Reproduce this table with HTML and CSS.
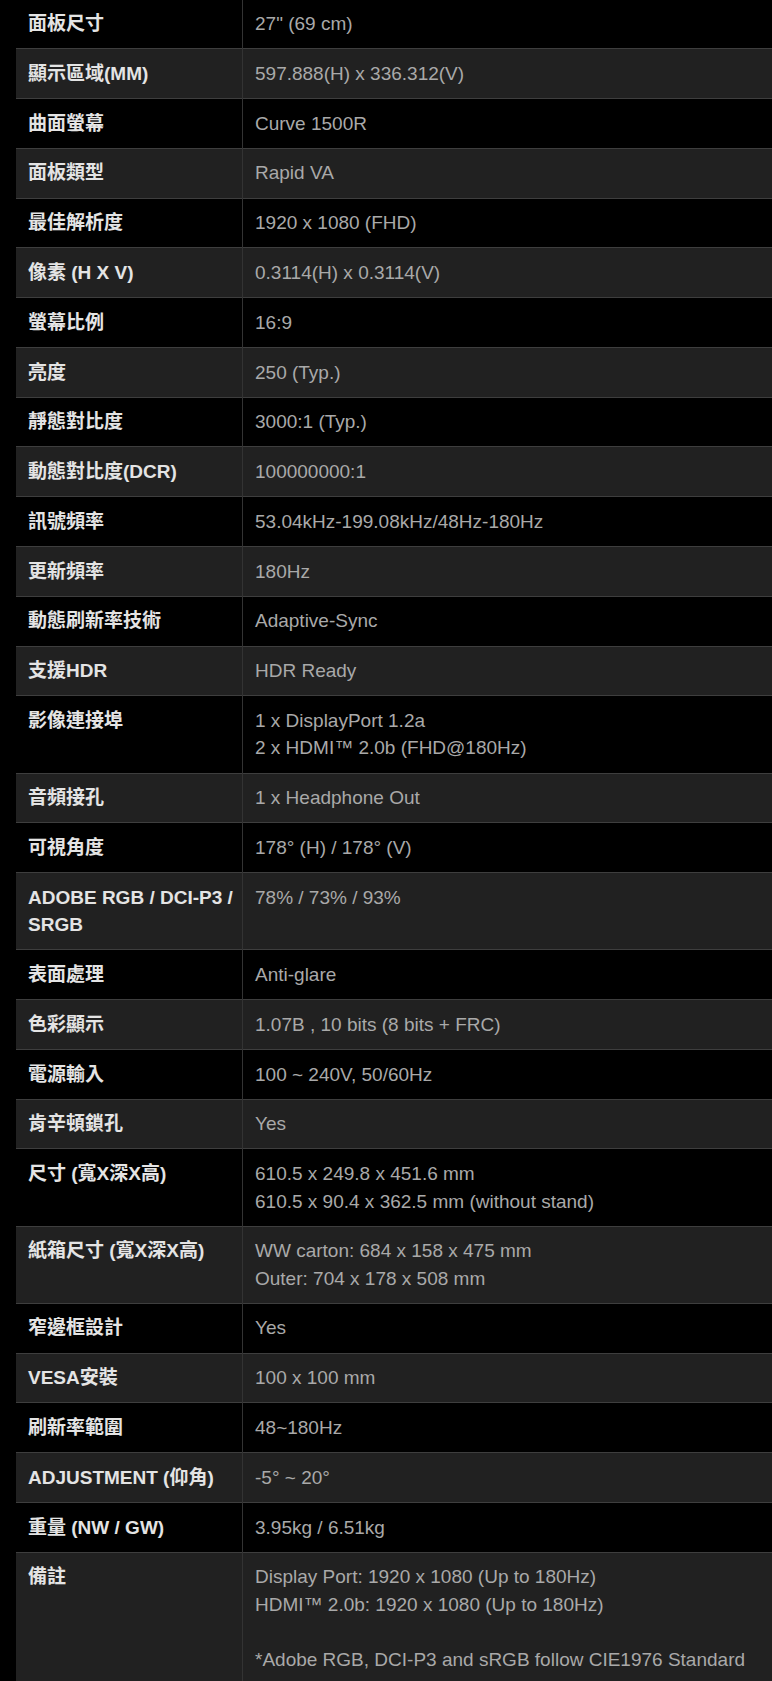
FILE: index.html
```html
<!DOCTYPE html>
<html lang="zh-Hant">
<head>
<meta charset="utf-8">
<title>規格</title>
<link rel="stylesheet" href="styles.css">
</head>
<body>
<div class="page">
<table class="spec">
<tbody>
<tr><th>面板尺寸</th><td>27" (69 cm)</td></tr>
<tr><th>顯示區域(MM)</th><td>597.888(H) x 336.312(V)</td></tr>
<tr><th>曲面螢幕</th><td>Curve 1500R</td></tr>
<tr><th>面板類型</th><td>Rapid VA</td></tr>
<tr><th>最佳解析度</th><td>1920 x 1080 (FHD)</td></tr>
<tr><th>像素 (H X V)</th><td>0.3114(H) x 0.3114(V)</td></tr>
<tr><th>螢幕比例</th><td>16:9</td></tr>
<tr><th>亮度</th><td>250 (Typ.)</td></tr>
<tr><th>靜態對比度</th><td>3000:1 (Typ.)</td></tr>
<tr><th>動態對比度(DCR)</th><td>100000000:1</td></tr>
<tr><th>訊號頻率</th><td>53.04kHz-199.08kHz/48Hz-180Hz</td></tr>
<tr><th>更新頻率</th><td>180Hz</td></tr>
<tr><th>動態刷新率技術</th><td>Adaptive-Sync</td></tr>
<tr><th>支援HDR</th><td>HDR Ready</td></tr>
<tr><th>影像連接埠</th><td>1 x DisplayPort 1.2a<br>2 x HDMI™ 2.0b (FHD@180Hz)</td></tr>
<tr><th>音頻接孔</th><td>1 x Headphone Out</td></tr>
<tr><th>可視角度</th><td>178° (H) / 178° (V)</td></tr>
<tr><th>ADOBE RGB / DCI-P3 / SRGB</th><td>78% / 73% / 93%</td></tr>
<tr><th>表面處理</th><td>Anti-glare</td></tr>
<tr><th>色彩顯示</th><td>1.07B , 10 bits (8 bits + FRC)</td></tr>
<tr><th>電源輸入</th><td>100 ~ 240V, 50/60Hz</td></tr>
<tr><th>肯辛頓鎖孔</th><td>Yes</td></tr>
<tr><th>尺寸 (寬X深X高)</th><td>610.5 x 249.8 x 451.6 mm<br>610.5 x 90.4 x 362.5 mm (without stand)</td></tr>
<tr><th>紙箱尺寸 (寬X深X高)</th><td>WW carton: 684 x 158 x 475 mm<br>Outer: 704 x 178 x 508 mm</td></tr>
<tr><th>窄邊框設計</th><td>Yes</td></tr>
<tr><th>VESA安裝</th><td>100 x 100 mm</td></tr>
<tr><th>刷新率範圍</th><td>48~180Hz</td></tr>
<tr><th>ADJUSTMENT (仰角)</th><td>-5° ~ 20°</td></tr>
<tr><th>重量 (NW / GW)</th><td>3.95kg / 6.51kg</td></tr>
<tr><th>備註</th><td>Display Port: 1920 x 1080 (Up to 180Hz)<br>HDMI™ 2.0b: 1920 x 1080 (Up to 180Hz)<br><br>*Adobe RGB, DCI-P3 and sRGB follow CIE1976 Standard</td></tr>
</tbody>
</table>
</div>
</body>
</html>
```

FILE: styles.css
```css
html, body {
  margin: 0;
  padding: 0;
  background: #000;
}

.page {
  padding-left: 16px;
  margin-top: -1.6px;
  overflow: hidden;
}

.spec {
  width: 756px;
  border-collapse: collapse;
  table-layout: fixed;
  font-family: "Liberation Sans", Arial, "Noto Sans CJK TC", sans-serif;
  font-size: 19px;
  line-height: 27.4px;
}

.spec tr {
  background: #000;
}

.spec tr:nth-child(even) {
  background: #212121;
}

.spec th,
.spec td {
  padding: 10.7px 12px 10.7px 12px;
  vertical-align: top;
  text-align: left;
  border-top: 1px solid #3e3e3e;
}

.spec tr:first-child th,
.spec tr:first-child td {
  border-top-color: #000;
}

.spec th {
  width: 206px;
  padding-right: 8px;
  font-weight: bold;
  color: #e4e4e4;
  border-right: 1px solid #333;
}

.spec td {
  color: #a9a9a9;
  font-weight: normal;
}
```
